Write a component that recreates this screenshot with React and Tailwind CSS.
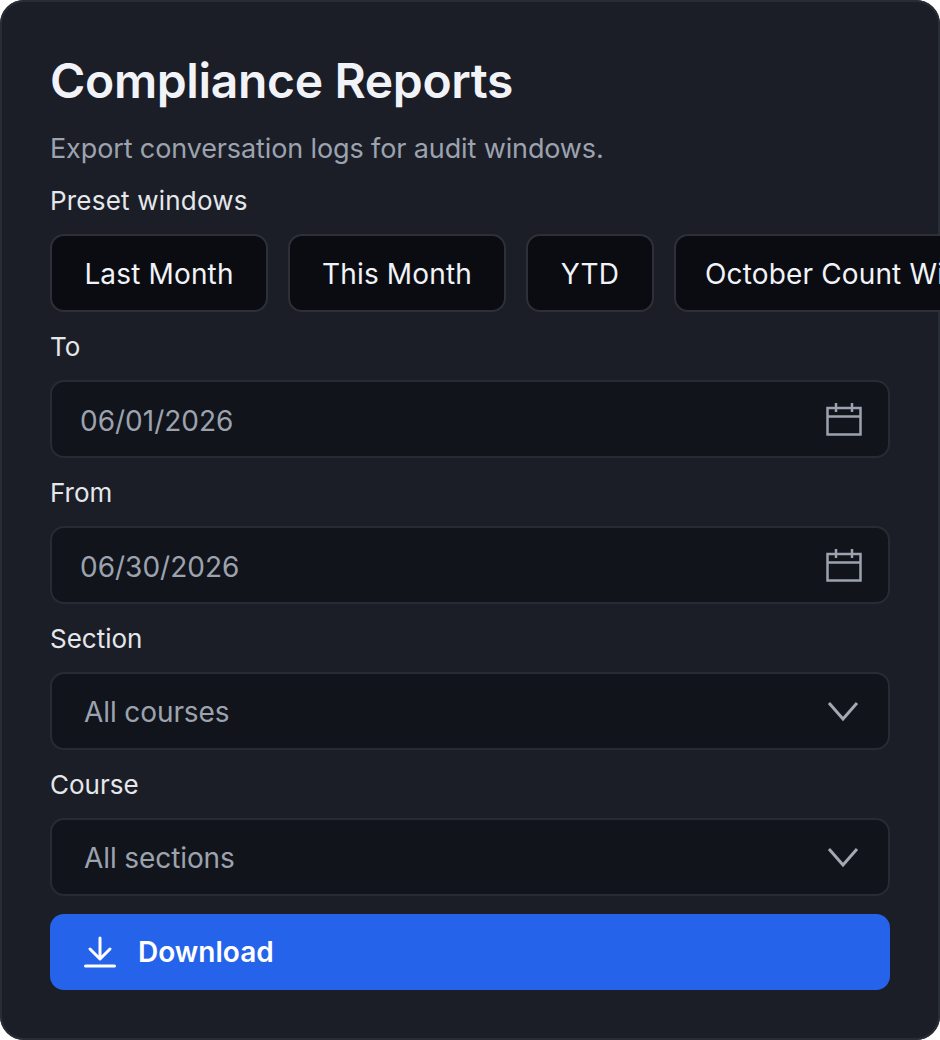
import React from 'react';

const presets = [
  { label: 'Last Month', width: 'w-[218px]', align: 'justify-center' },
  { label: 'This Month', width: 'w-[218px]', align: 'justify-center' },
  { label: 'YTD', width: 'w-[128px]', align: 'justify-center' },
  { label: 'October Count Window', width: 'w-[360px]', align: 'justify-start pl-[29px]' },
];

function CalendarIcon() {
  return (
    <svg width="36" height="34" viewBox="0 0 36 34" fill="none" stroke="#9ca3af" strokeWidth="2.5" className="shrink-0">
      <rect x="1.5" y="6" width="33" height="26.5" />
      <path d="M1.5 14.5h33M10 1v9M26 1v9" />
    </svg>
  );
}

function ChevronIcon() {
  return (
    <svg width="32" height="22" viewBox="0 0 32 22" fill="none" stroke="#a3a8b1" strokeWidth="3" strokeLinejoin="miter" className="shrink-0">
      <path d="M2 3l14 16L30 3" />
    </svg>
  );
}

function DownloadIcon() {
  return (
    <svg width="32" height="32" viewBox="0 0 32 32" fill="none" stroke="#ffffff" strokeWidth="3" strokeLinecap="round" strokeLinejoin="round" className="shrink-0">
      <path d="M16 2v20M6 13l10 10 10-10M1.5 30h29" />
    </svg>
  );
}

function DateField({ label, value }) {
  return (
    <div>
      <div className="flex h-[68px] items-center pt-[2px] text-[26px] leading-[32px] text-[#e5e7eb]">{label}</div>
      <div className="flex h-[78px] items-center justify-between rounded-[14px] border-2 border-[#272b33] bg-[#11141b] pl-[28px] pr-[26px] text-[28px] text-[#9ca3af]">
        <span className="pt-[3px]">{value}</span>
        <CalendarIcon />
      </div>
    </div>
  );
}

function SelectField({ label, value }) {
  return (
    <div>
      <div className="flex h-[68px] items-center pt-[2px] text-[26px] leading-[32px] text-[#e5e7eb]">{label}</div>
      <div className="flex h-[78px] items-center justify-between rounded-[14px] border-2 border-[#272b33] bg-[#11141b] pl-[32px] pr-[29px] text-[28px] tracking-[-0.1px] text-[#9ca3af]">
        <span className="pt-[2px]">{value}</span>
        <ChevronIcon />
      </div>
    </div>
  );
}

export default function App() {
  return (
    <div className="h-[1040px] w-[940px] overflow-hidden bg-white font-['Inter',sans-serif]">
      <div className="h-[1040px] w-[940px] overflow-hidden rounded-[24px] bg-[#1b1e27] px-[50px] pt-[50px] shadow-[inset_0_0_0_2px_#282c35]">
        <h1 className="pt-[1px] text-[48px] font-semibold leading-[60px] tracking-[-0.35px] text-[#f1f3f8]">Compliance Reports</h1>
        <p className="mt-[21px] text-[27px] leading-[34px] tracking-[-0.12px] text-[#9ca3af]">Export conversation logs for audit windows.</p>
        <div className="mt-[19px] text-[26px] leading-[32px] tracking-[0.2px] text-[#e5e7eb]">Preset windows</div>
        <div className="mt-[17px] flex w-[1000px] gap-[20px]">
          {presets.map(p => (
            <button
              key={p.label}
              className={`flex h-[78px] shrink-0 items-center whitespace-nowrap rounded-[14px] border-2 border-[#2d3038] bg-[#0a0c11] pt-[2px] text-[28px] tracking-[0.15px] text-[#f1f3f8] ${p.width} ${p.align}`}
            >
              {p.label}
            </button>
          ))}
        </div>
        <DateField label="To" value="06/01/2026" />
        <DateField label="From" value="06/30/2026" />
        <SelectField label="Section" value="All courses" />
        <SelectField label="Course" value="All sections" />
        <button className="mt-[18px] flex h-[76px] w-full items-center gap-[22px] rounded-[14px] bg-[#2563eb] pl-[34px] text-[28px] font-semibold text-white">
          <DownloadIcon />
          Download
        </button>
      </div>
    </div>
  );
}
